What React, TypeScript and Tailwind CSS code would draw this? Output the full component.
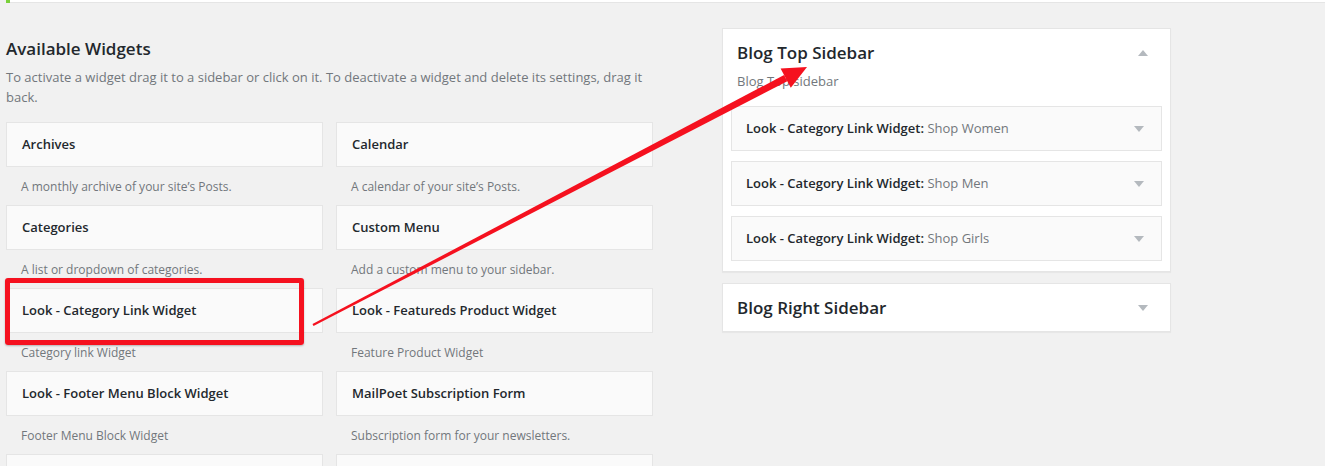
import React from "react";

const font = { fontFamily: '"Open Sans", "Noto Sans", Arial, sans-serif' };

const widgets: [string, string][] = [
  ["Archives", "A monthly archive of your site’s Posts."],
  ["Calendar", "A calendar of your site’s Posts."],
  ["Categories", "A list or dropdown of categories."],
  ["Custom Menu", "Add a custom menu to your sidebar."],
  ["Look - Category Link Widget", "Category link Widget"],
  ["Look - Featureds Product Widget", "Feature Product Widget"],
  ["Look - Footer Menu Block Widget", "Footer Menu Block Widget"],
  ["MailPoet Subscription Form", "Subscription form for your newsletters."],
  ["", ""],
  ["", ""],
];

function Tri({ up = false }: { up?: boolean }) {
  return (
    <svg width="10" height="6" viewBox="0 0 10 6" className="shrink-0">
      {up ? <polygon points="0,6 10,6 5,0" fill="#b4b9be" /> : <polygon points="0,0 10,0 5,6" fill="#b4b9be" />}
    </svg>
  );
}

function SideWidget({ name }: { name: string }) {
  return (
    <div className="h-[45px] border border-[#e5e5e5] bg-[#fafafa] flex items-center justify-between pl-[14px] pr-[17px]">
      <span className="text-[13px] font-semibold text-[#23282d]">
        Look - Category Link Widget: <span className="font-normal text-[#72777c]">{name}</span>
      </span>
      <Tri />
    </div>
  );
}

export default function App() {
  return (
    <div className="relative w-[1325px] h-[466px] overflow-hidden bg-[#f1f1f1]" style={font}>
      {/* top notice remnant */}
      <div className="flex h-[3px]">
        <div className="w-[6px] bg-[#f1f1f1]" />
        <div className="w-[4px] bg-[#7ad03a]" />
        <div className="flex-1 bg-white border-b border-[#e5e5e5]" />
      </div>

      <div className="flex pl-[6px]">
        {/* left column */}
        <div className="w-[647px] pt-[34px]">
          <h2 className="text-[17px] leading-[24px] font-semibold text-[#23282d]">Available Widgets</h2>
          <p className="mt-[6px] text-[13px] leading-[20px] text-[#72777c] pr-[5px]">
            To activate a widget drag it to a sidebar or click on it. To deactivate a widget and delete its settings, drag it back.
          </p>
          <div className="mt-[15px] grid grid-cols-[317px_317px] gap-x-[13px]">
            {widgets.map(([t, d], i) => (
              <div key={i}>
                <div className="h-[45px] border border-[#e5e5e5] bg-[#fafafa] flex items-center pl-[15px] text-[13px] font-semibold text-[#23282d]">
                  {t}
                </div>
                <div className="h-[38px] pt-[10px] pl-[15px] text-[12px] leading-[20px] text-[#72777c]">{d}</div>
              </div>
            ))}
          </div>
        </div>

        {/* right column */}
        <div className="ml-[69px] w-[449px] pt-[25px]">
          <div className="border border-[#e5e5e5] bg-white shadow-[0_1px_1px_rgba(0,0,0,0.04)] pt-[12px] pb-[10px]">
            <div className="flex items-center justify-between pl-[14px] pr-[22px]">
              <h2 className="text-[17px] leading-[24px] font-semibold text-[#23282d]">Blog Top Sidebar</h2>
              <Tri up />
            </div>
            <p className="mt-[6px] pl-[14px] text-[13px] leading-[20px] text-[#72777c]">Blog Top sidebar</p>
            <div className="mt-[15px] px-[8px] flex flex-col gap-[10px]">
              <SideWidget name="Shop Women" />
              <SideWidget name="Shop Men" />
              <SideWidget name="Shop Girls" />
            </div>
          </div>
          <div className="mt-[11px] h-[49px] border border-[#e5e5e5] bg-white shadow-[0_1px_1px_rgba(0,0,0,0.04)] flex items-center justify-between pl-[14px] pr-[22px]">
            <h2 className="text-[17px] leading-[24px] font-semibold text-[#23282d]">Blog Right Sidebar</h2>
            <Tri />
          </div>
        </div>
      </div>

      {/* annotation: red box */}
      <div className="absolute left-[5px] top-[278px] w-[299px] h-[67px] border-[5px] border-[#f5111f] rounded-[3px] shadow-[0_1px_2px_rgba(0,0,0,0.25)]" />

      {/* annotation: arrow */}
      <svg className="absolute left-0 top-0 pointer-events-none" width="1325" height="466" viewBox="0 0 1325 466">
        <polygon points="313.5,325.9 312.5,324.1 784.1,75.0 787.3,81.2" fill="#f5111f" />
        <polygon points="807,67 790.8,87.8 780.6,68.4" fill="#f5111f" />
      </svg>
    </div>
  );
}
